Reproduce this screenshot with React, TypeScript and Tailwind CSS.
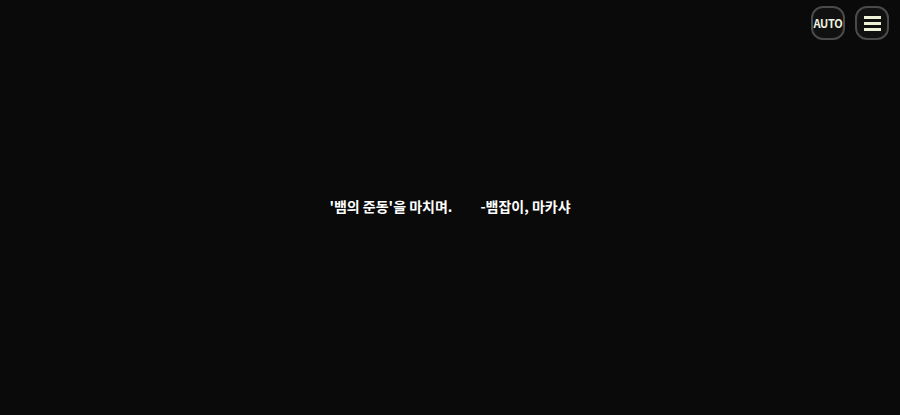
export default function App() {
  return (
    <div className="relative w-full h-[415px] bg-[#0a0a0a] flex items-center justify-center" style={{ fontFamily: '"Noto Sans CJK KR", "Noto Sans", sans-serif' }}>
      <div className="absolute top-[6px] right-[11px] flex gap-[10px]">
        <button className="w-[34px] h-[34px] rounded-[12px] border-2 border-[#4a4a4a] bg-[#111] text-[#eef3e0] text-[11px] font-bold flex items-center justify-center tracking-tight">
          AUTO
        </button>
        <button className="w-[34px] h-[34px] rounded-[12px] border-2 border-[#4a4a4a] bg-[#111] flex flex-col items-center justify-center gap-[3px]">
          <span className="block w-[17px] h-[3px] bg-[#eef3d8]" />
          <span className="block w-[17px] h-[3px] bg-[#eef3d8]" />
          <span className="block w-[17px] h-[3px] bg-[#eef3d8]" />
        </button>
      </div>
      <p className="text-white text-[14px] font-bold whitespace-pre -mt-[2px] flex gap-[28px]">
        <span>'뱀의 준동'을 마치며.</span>
        <span>-뱀잡이, 마카샤</span>
      </p>
    </div>
  )
}
